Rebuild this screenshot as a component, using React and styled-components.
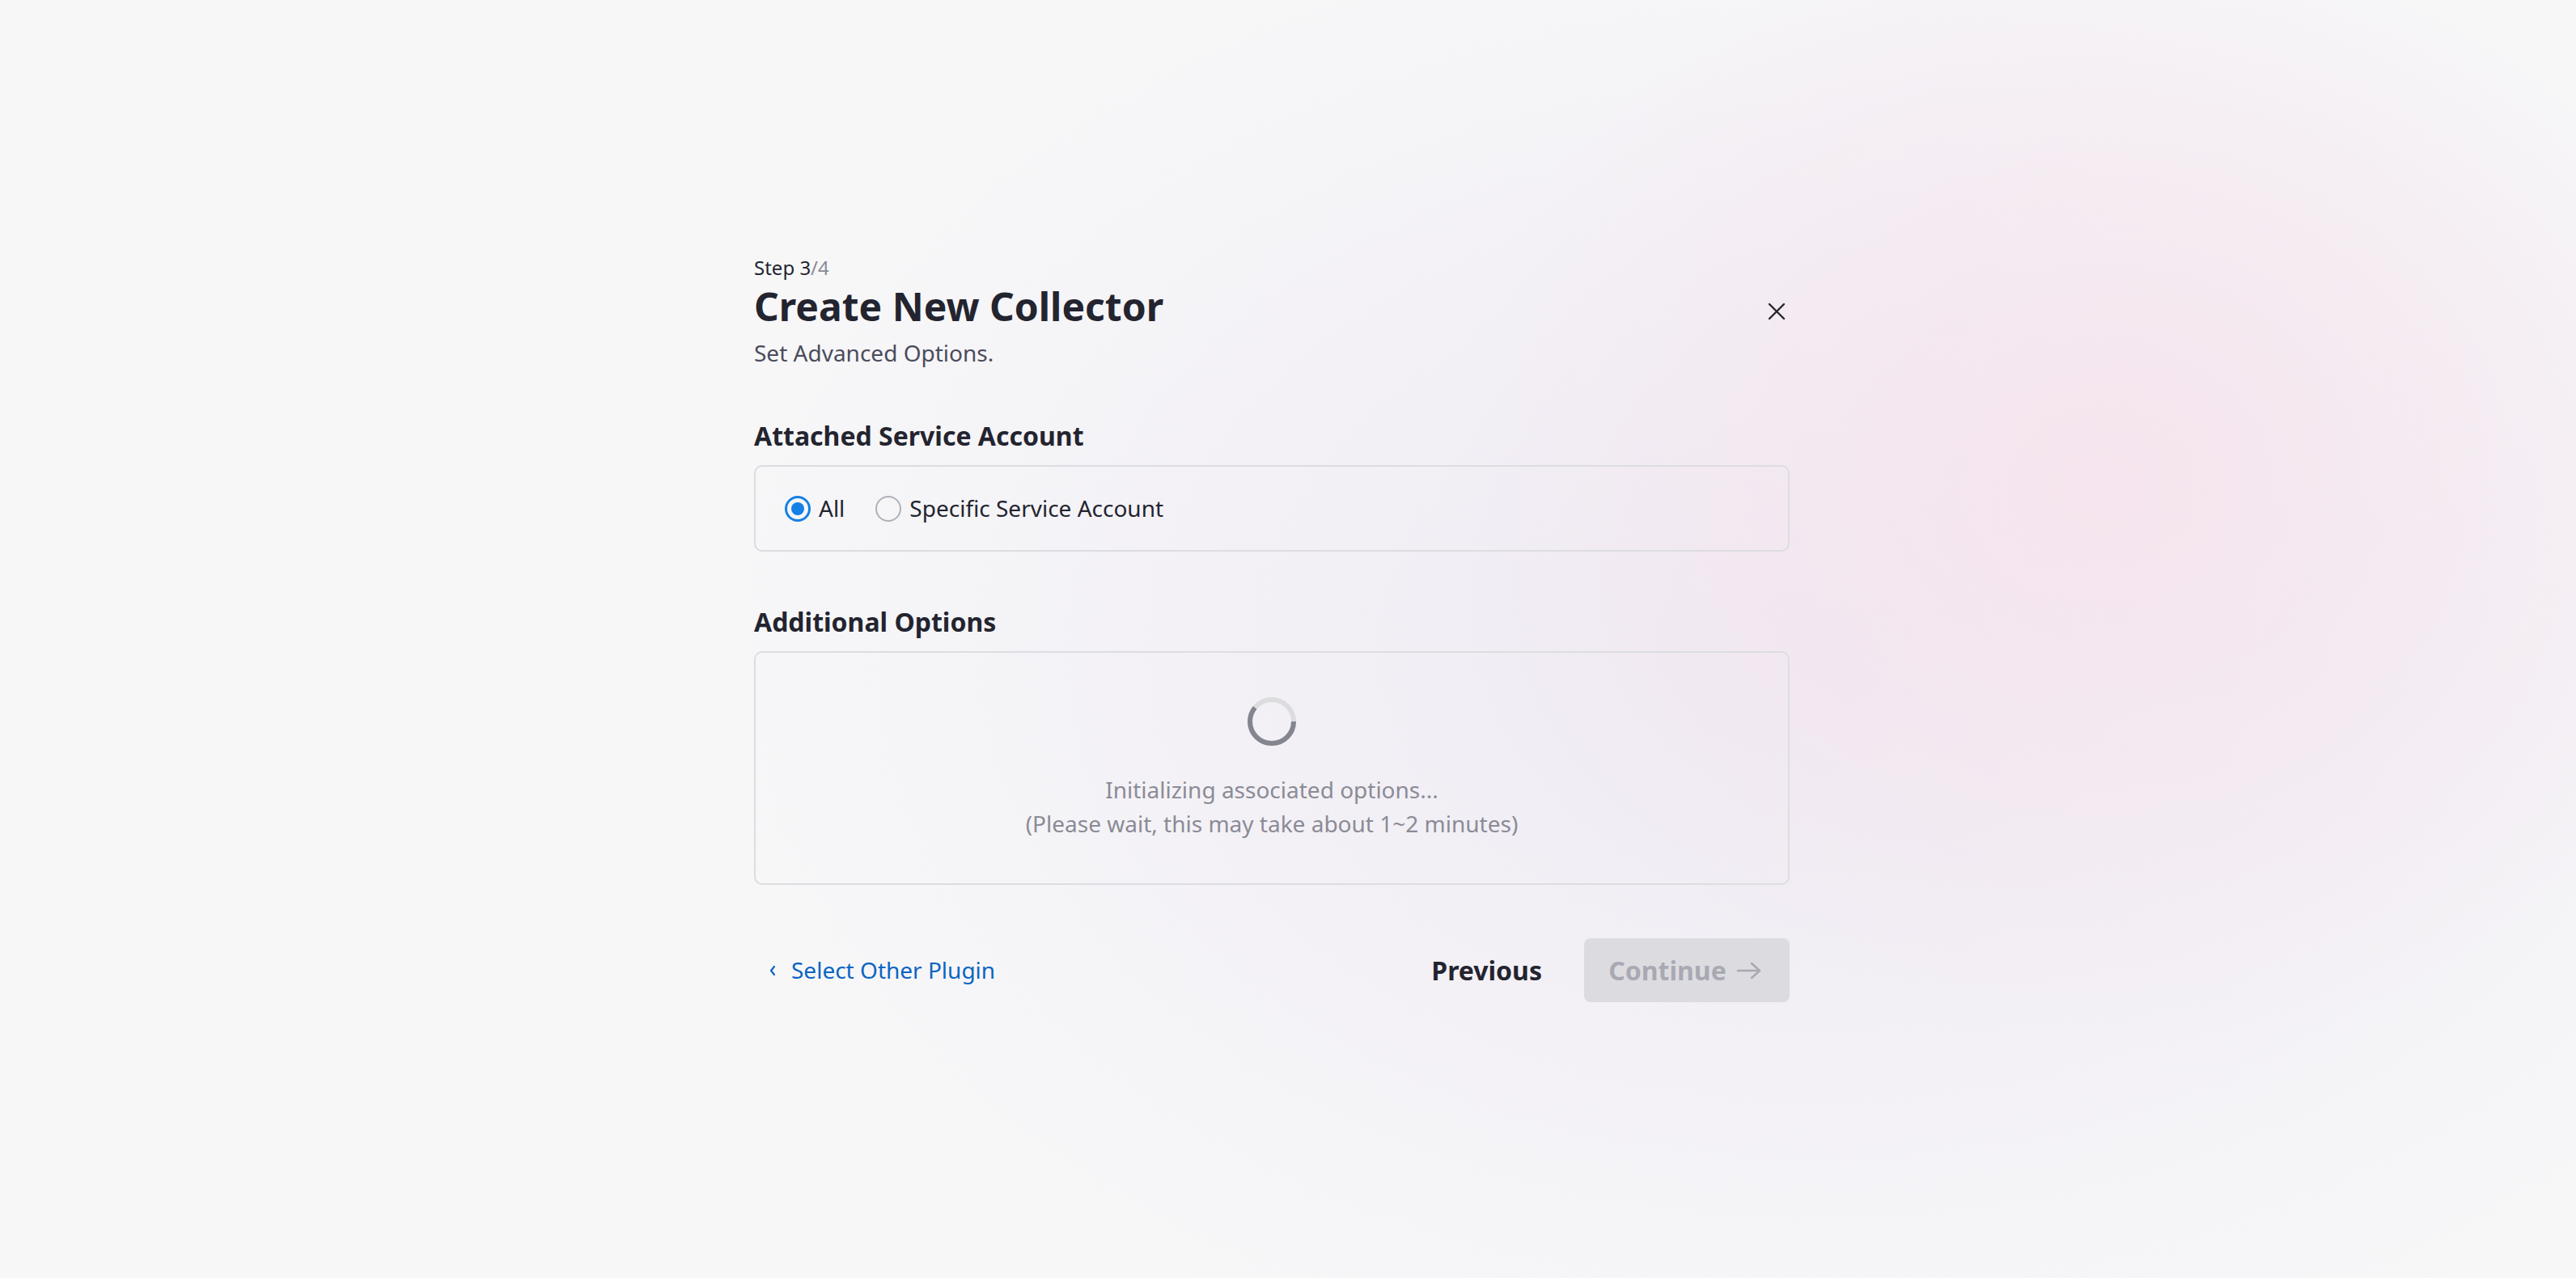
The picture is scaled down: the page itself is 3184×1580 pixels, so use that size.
import React from 'react';
import styled, { createGlobalStyle } from 'styled-components';

const GlobalStyle = createGlobalStyle`
    html, body {
        margin: 0;
        padding: 0;
    }

    body {
        min-height: 100vh;
        font-family: "Noto Sans", "Open Sans", sans-serif;
        color: #23242f;
        background-color: #f7f7f8;
        background-image:
            radial-gradient(ellipse 820px 700px at 2600px 600px, rgba(246, 228, 237, 0.95) 0%, rgba(246, 228, 237, 0) 100%),
            radial-gradient(ellipse 1400px 950px at 2250px 800px, rgba(237, 232, 243, 0.9) 0%, rgba(237, 232, 243, 0) 100%);
        background-repeat: no-repeat;
    }
`;

const Page = styled.main`
    min-height: 1580px;
    box-sizing: border-box;
    display: flex;
    justify-content: center;
    padding: 314px 40px 0 0;
`;

const Panel = styled.div`
    width: 1280px;
    display: flex;
    flex-direction: column;
`;

const Header = styled.header`
    display: flex;
    justify-content: space-between;
    align-items: center;
`;

const HeaderText = styled.div`
    display: flex;
    flex-direction: column;
`;

const Step = styled.div`
    font-size: 24px;
    line-height: 1.4;
    font-weight: 400;
    color: #23242f;

    & > span {
        color: #8b8b96;
    }
`;

const Title = styled.h1`
    margin: 2px 0 10px;
    font-size: 48px;
    line-height: 1.2;
    font-weight: 700;
    color: #23242f;
`;

const Subtitle = styled.p`
    margin: 0;
    font-size: 28px;
    line-height: 1.4;
    color: #4b4c5c;
`;

const CloseButton = styled.button`
    width: 32px;
    height: 32px;
    padding: 0;
    border: none;
    background: none;
    display: flex;
    align-items: center;
    justify-content: center;
    color: #23242f;
    cursor: pointer;
`;

const Section = styled.section`
    margin-top: ${p => p.$top}px;
    display: flex;
    flex-direction: column;
    gap: 16px;
`;

const SectionTitle = styled.h2`
    margin: 0;
    font-size: 32px;
    line-height: 40px;
    font-weight: 700;
    color: #23242f;
`;

const Box = styled.div`
    box-sizing: border-box;
    border: 2px solid #dddde1;
    border-radius: 10px;
    display: flex;
`;

const RadioBox = styled(Box)`
    height: 107px;
    padding: 0 36px;
    align-items: center;
    gap: 38px;
`;

const RadioLabel = styled.label`
    display: flex;
    align-items: center;
    gap: 10px;
    font-size: 28px;
    line-height: 1.4;
    color: #23242f;
    cursor: pointer;
`;

const RadioMark = styled.span`
    box-sizing: border-box;
    width: 32px;
    height: 32px;
    border-radius: 50%;
    border: ${p => (p.$checked ? '3px solid #1580e6' : '2px solid #b0b0b8')};
    display: flex;
    align-items: center;
    justify-content: center;

    &::after {
        content: '';
        width: 16px;
        height: 16px;
        border-radius: 50%;
        background: #1580e6;
        display: ${p => (p.$checked ? 'block' : 'none')};
    }
`;

const LoadingBox = styled(Box)`
    height: 289px;
    padding-top: 55px;
    flex-direction: column;
    align-items: center;
`;

const LoadingText = styled.p`
    margin: 33px 0 0;
    font-size: 28px;
    line-height: 42px;
    text-align: center;
    color: #8b8b96;
`;

const Footer = styled.footer`
    margin-top: 66px;
    display: flex;
    justify-content: space-between;
    align-items: center;
`;

const BackLink = styled.a`
    display: flex;
    align-items: center;
    gap: 18px;
    padding-left: 18px;
    font-size: 28px;
    line-height: 1.4;
    color: #0b65c2;
    text-decoration: none;
    cursor: pointer;
`;

const Actions = styled.div`
    display: flex;
    align-items: center;
    gap: 20px;
`;

const TextButton = styled.button`
    height: 79px;
    padding: 0 32px;
    border: none;
    background: none;
    font-family: inherit;
    font-size: 32px;
    font-weight: 700;
    color: #23242f;
    cursor: pointer;
`;

const PrimaryButton = styled.button`
    height: 79px;
    width: 254px;
    padding: 0 4px 0 0;
    border: none;
    border-radius: 8px;
    background: ${p => (p.disabled ? '#dcdce0' : '#23242f')};
    color: ${p => (p.disabled ? '#a9a9b3' : '#ffffff')};
    display: flex;
    align-items: center;
    justify-content: center;
    gap: 12px;
    font-family: inherit;
    font-size: 32px;
    font-weight: 700;
`;

function Spinner() {
    return (
        <svg width="60" height="60" viewBox="0 0 60 60">
            <circle cx="30" cy="30" r="27" fill="none" stroke="#dcdcdf" strokeWidth="6" />
            <circle cx="30" cy="30" r="27" fill="none" stroke="#85858f" strokeWidth="6"
                strokeDasharray="103 170" />
        </svg>
    );
}

function Radio({ checked, children }) {
    return (
        <RadioLabel>
            <RadioMark $checked={checked} />
            {children}
        </RadioLabel>
    );
}

export default function App() {
    return (
        <>
            <GlobalStyle />
            <Page>
                <Panel>
                    <Header>
                        <HeaderText>
                            <Step>Step 3<span>/4</span></Step>
                            <Title>Create New Collector</Title>
                            <Subtitle>Set Advanced Options.</Subtitle>
                        </HeaderText>
                        <CloseButton aria-label="Close">
                            <svg width="22" height="22" viewBox="0 0 22 22">
                                <path d="M2 2 L20 20 M20 2 L2 20" stroke="currentColor" strokeWidth="2.4" strokeLinecap="round" />
                            </svg>
                        </CloseButton>
                    </Header>

                    <Section $top={63}>
                        <SectionTitle>Attached Service Account</SectionTitle>
                        <RadioBox>
                            <Radio checked>All</Radio>
                            <Radio>Specific Service Account</Radio>
                        </RadioBox>
                    </Section>

                    <Section $top={67}>
                        <SectionTitle>Additional Options</SectionTitle>
                        <LoadingBox>
                            <Spinner />
                            <LoadingText>
                                Initializing associated options...<br />
                                (Please wait, this may take about 1~2 minutes)
                            </LoadingText>
                        </LoadingBox>
                    </Section>

                    <Footer>
                        <BackLink>
                            <svg width="10" height="14" viewBox="0 0 10 14">
                                <path d="M7 2 L3 7 L7 12" fill="none" stroke="currentColor" strokeWidth="2.2" strokeLinecap="round" strokeLinejoin="round" />
                            </svg>
                            Select Other Plugin
                        </BackLink>
                        <Actions>
                            <TextButton>Previous</TextButton>
                            <PrimaryButton disabled>
                                Continue
                                <svg width="32" height="24" viewBox="0 0 32 24">
                                    <path d="M2 12 H29 M19 3 L29 12 L19 21" fill="none" stroke="currentColor" strokeWidth="2.6" strokeLinecap="round" strokeLinejoin="round" />
                                </svg>
                            </PrimaryButton>
                        </Actions>
                    </Footer>
                </Panel>
            </Page>
        </>
    );
}
